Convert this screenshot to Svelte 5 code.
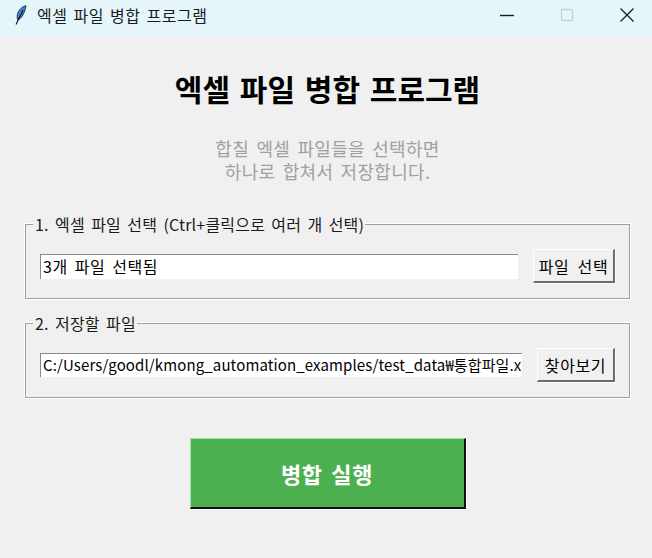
<script>
  // Paths and labels shown in the merge window
  let selected = '3개 파일 선택됨';
  let savePath = 'C:/Users/goodl/kmong_automation_examples/test_data₩통합파일.x';
</script>

<div class="window">
  <div class="titlebar">
    <div class="title-left">
      <svg class="feather" width="13" height="20" viewBox="0 0 13 20">
        <path d="M12 0.7 C8 1.5 4.5 5 3.4 9.5 C2.9 12 3.2 14 4 15 C7.5 13.5 11 7.5 12 0.7 Z" fill="#3f86d8" stroke="#10243f" stroke-width="0.9" />
        <path d="M9 5 L2 19.5" stroke="#111" stroke-width="1.1" fill="none" />
      </svg>
      <span class="title-text">엑셀 파일 병합 프로그램</span>
    </div>
    <div class="controls">
      <span class="ctl"><svg width="16" height="16" viewBox="0 0 16 16"><path d="M1 8.5H15" stroke="#1a1a1a" stroke-width="1.4" /></svg></span>
      <span class="ctl"><svg width="16" height="16" viewBox="0 0 16 16"><rect x="2.5" y="2.5" width="11" height="11" rx="1" fill="none" stroke="#c3cfd1" stroke-width="1.3" /></svg></span>
      <span class="ctl"><svg width="16" height="16" viewBox="0 0 16 16"><path d="M1.5 1.5L14.5 14.5M14.5 1.5L1.5 14.5" stroke="#1a1a1a" stroke-width="1.3" /></svg></span>
    </div>
  </div>

  <main class="content">
    <h1>엑셀 파일 병합 프로그램</h1>
    <p class="desc">합칠 엑셀 파일들을 선택하면<br />하나로 합쳐서 저장합니다.</p>

    <fieldset class="group first">
      <legend>1. 엑셀 파일 선택 (Ctrl+클릭으로 여러 개 선택)</legend>
      <div class="row">
        <div class="entry">{selected}</div>
        <button class="tk-btn pick">파일 선택</button>
      </div>
    </fieldset>

    <fieldset class="group">
      <legend>2. 저장할 파일</legend>
      <div class="row">
        <div class="entry path">{savePath}</div>
        <button class="tk-btn browse">찾아보기</button>
      </div>
    </fieldset>

    <div class="actions">
      <button class="run">병합 실행</button>
    </div>
  </main>
</div>

<style>
  :global(body) {
    margin: 0;
    background: #f0f0f0;
  }

  .window {
    width: 652px;
    height: 558px;
    overflow: hidden;
    font-family: "Noto Sans CJK KR", "Liberation Sans", sans-serif;
    color: #000;
    background: #f0f0f0;
  }

  .titlebar {
    box-sizing: border-box;
    height: 36px;
    padding-bottom: 7px;
    background: #e5f6fb;
    display: flex;
    align-items: center;
    justify-content: space-between;
  }

  .title-left {
    display: flex;
    align-items: center;
    gap: 10px;
    padding-left: 14px;
  }

  .title-text {
    font-size: 16px;
    line-height: 20px;
    color: #1a1a1a;
    letter-spacing: 0.5px;
    word-spacing: 2px;
  }

  .controls {
    display: flex;
    gap: 44px;
    padding-right: 17px;
  }

  .ctl {
    display: flex;
    width: 16px;
    height: 16px;
  }

  .content {
    padding: 0 22px 0 25px;
  }

  h1 {
    margin: 0;
    padding-top: 33px;
    font-size: 30px;
    font-weight: 700;
    line-height: 38px;
    word-spacing: 3px;
    text-align: center;
  }

  .desc {
    margin: 30px 0 0;
    font-size: 18px;
    line-height: 23px;
    letter-spacing: 0.3px;
    word-spacing: 3px;
    color: #a0a0a0;
    text-align: center;
  }

  .group {
    margin: 0;
    padding: 0 14px;
    height: 86px;
    box-sizing: border-box;
    border: 1px solid #a0a0a0;
    box-shadow: 0 0 0 1px #fff;
  }

  .group.first {
    margin-top: 30px;
  }

  .group + .group {
    margin-top: 13px;
  }

  legend {
    margin-left: -7px;
    padding: 0 1px 0 2px;
    background: #f0f0f0;
    font-size: 16px;
    line-height: 22px;
    letter-spacing: 0.2px;
    word-spacing: 2.5px;
    color: #1a1a1a;
  }

  .row {
    display: flex;
    align-items: center;
    justify-content: space-between;
    padding-top: 14px;
  }

  .entry {
    box-sizing: border-box;
    height: 25px;
    background: #fff;
    border-top: 1px solid #8a8a8a;
    border-left: 1px solid #8a8a8a;
    padding-left: 2px;
    font-size: 16px;
    line-height: 23px;
    letter-spacing: 0.5px;
    word-spacing: 3px;
    white-space: nowrap;
    overflow: hidden;
    width: 478px;
  }

  .entry.path {
    width: 482px;
    height: 24px;
    font-size: 15px;
    line-height: 22px;
    letter-spacing: 0.12px;
    word-spacing: 0;
  }

  .tk-btn {
    box-sizing: border-box;
    height: 34px;
    padding: 0;
    font-family: inherit;
    font-size: 16px;
    letter-spacing: 0.6px;
    word-spacing: 4px;
    color: #000;
    background: #f0f0f0;
    border: none;
    border-top: 1px solid #fff;
    border-left: 1px solid #fff;
    border-right: 2px solid #6d6d6d;
    border-bottom: 2px solid #6d6d6d;
    box-shadow: 1px 1px 0 #fff;
  }

  .pick {
    width: 82px;
  }

  .browse {
    width: 78px;
  }

  .actions {
    display: flex;
    justify-content: center;
    margin-top: 40px;
  }

  .run {
    box-sizing: border-box;
    width: 276px;
    height: 71px;
    font-family: inherit;
    font-size: 22px;
    font-weight: 700;
    letter-spacing: 0.6px;
    word-spacing: 3px;
    color: #fff;
    background: #4caf50;
    border: none;
    border-top: 1px solid #a5e0a8;
    border-left: 1px solid #a5e0a8;
    border-right: 2px solid #111;
    border-bottom: 2px solid #111;
    box-shadow: 1px 1px 0 #fff;
  }
</style>
